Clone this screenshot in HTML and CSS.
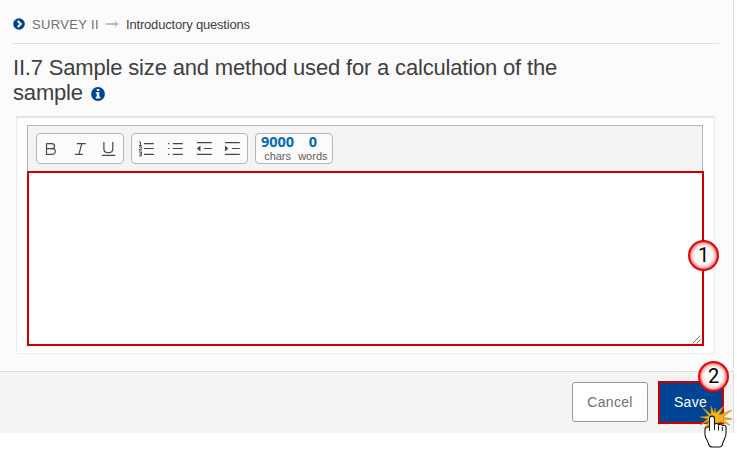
FILE: index.html
```
<!DOCTYPE html>
<html lang="en">
<head>
    <meta charset="UTF-8">
    <meta name="viewport" content="width=device-width, initial-scale=1.0">
    <title>Survey II - Introductory questions</title>
    <link rel="stylesheet" href="styles.css">
</head>
<body>

<div class="page">
    <!-- Main content -->
    <div class="main-content">
        <div class="breadcrumb">
            <svg class="crumb-icon" width="12" height="12" viewBox="0 0 12 12"><circle cx="6" cy="6" r="5.8" fill="#004494"/><path d="M4.8 3 7.8 6 4.8 9" fill="none" stroke="#fff" stroke-width="2"/></svg>
            <span class="crumb-parent">SURVEY II</span>
            <svg class="crumb-arrow" width="13" height="8" viewBox="0 0 13 8"><path d="M0 3h9V1l4 3-4 3V5H0z" fill="#bcbcbc"/></svg>
            <span class="crumb-current">Introductory questions</span>
        </div>

        <h1>II.7 Sample size and method used for a calculation of the<br>sample
            <svg class="info-icon" width="14" height="14" viewBox="0 0 14 14"><circle cx="7" cy="7" r="6.9" fill="#004494"/><path d="M5.8 2h2.5v2H5.8zM4.8 5.2h3.5v4.6h1v1.6H4.8V9.8h1V6.7h-1z" fill="#fff"/></svg>
        </h1>

        <div class="card">
            <div class="toolbar">
                <div class="tool-group styles">
                    <svg class="tool" viewBox="0 0 29 29"><path d="M9.6 9.5h5.2c4 0 4 5.2 0 5.2H9.6M14.8 14.7c5 0 5 5.8 0 5.8H9.6v-11" /></svg>
                    <svg class="tool" viewBox="0 0 29 29"><path d="M11 9.5h9M9 20.5h8M16 9.5l-3 11" /></svg>
                    <svg class="tool" viewBox="0 0 29 29"><path d="M10 8v7c0 5 9 5 9 0V8M8 21.5h13.5" /></svg>
                </div>
                <div class="tool-group lists">
                    <svg class="tool" viewBox="0 0 29 29"><path d="M12 9.5h10M12 14.5h10M12 20.5h10"/><path class="marks" d="M7 8h1.5v3.5M7 11.5h3M7 13h2.5v1.5L7 16h3M7 18h2.5v4H7M7.5 20h2"/></svg>
                    <svg class="tool" viewBox="0 0 29 29"><path d="M12 9.5h10M12 14.5h10M12 20.5h10M7 9.5h1.4M7 14.5h1.4M7 20.5h1.4"/></svg>
                    <svg class="tool" viewBox="0 0 29 29"><path d="M7 8.5h15M14 14.5h8M7 20.5h15"/><path class="solid" d="M10.5 11.5v6L7 14.5z"/></svg>
                    <svg class="tool" viewBox="0 0 29 29"><path d="M7 8.5h15M14 14.5h8M7 20.5h15"/><path class="solid" d="M7 11.5v6l3.5-3z"/></svg>
                </div>
                <div class="tool-group counter">
                    <div class="count chars"><b>9000</b><span>chars</span></div>
                    <div class="count words"><b>0</b><span>words</span></div>
                </div>
            </div>
            <div class="text-area">
                <svg class="resizer" width="9" height="9" viewBox="0 0 9 9"><path d="M.5 8.5l8-8M4.5 8.5l4-4"/></svg>
                <span class="marker marker-text">1</span>
            </div>
        </div>
    </div>

    <!-- Buttons -->
    <div class="footer">
        <button class="btn cancel-btn">Cancel</button>
        <div class="save-wrap">
            <button class="btn save-btn">Save</button>
            <span class="marker marker-save">2</span>
            <svg class="pointer" width="36" height="47" viewBox="0 0 36 47">
                <path class="burst" d="M12 12.500 3 5l7 9-9 1 8 2-8 6 9-4-5 8 8-6h5l4-1 9 3-7-5 9-1-9-2 9-7-13 5 5-9-8 7-1-5-1 5-3-7z"/>
                <path class="hand" d="M10.500 17c0-3.800 5-3.800 5 0v6c.5-2.200 4-2 4 .3.500-1.800 3.800-1.400 3.800.8.700-1.600 3.700-1 3.700 1.200v6.500c0 4-2.200 5.500-3 8.700-.4 3-1.500 4.500-4 4.500h-7c-2.500 0-3-1.500-3.700-4-.8-3-3.300-5-3.300-8.500v-4.500c.3-2.500 2.500-3.500 4.500-3z"/>
                <path class="fingers" d="M15.500 22v6M19.500 23.500v5M23.300 25v4M10.500 24v5"/>
            </svg>
        </div>
    </div>
</div>

</body>
</html>
```
FILE: styles.css
```
* {
    box-sizing: border-box;
}
body {
    margin: 0;
    min-height: 450px;
    background-color: #fff;
    font-family: "Liberation Sans", Arial, sans-serif;
    color: #404040;
}
.page {
    width: 734px;
    height: 433px;
    border-right: 1px solid #e0e0e0;
    background-color: #fbfbfb;
    display: flex;
    flex-direction: column;
}
.main-content {
    height: 371px;
    padding: 0 14px 0 13px;
}

/* Breadcrumb */
.breadcrumb {
    height: 44px;
    padding-top: 5px;
    border-bottom: 1px solid #e0e0e0;
    display: flex;
    align-items: center;
    font-size: 13px;
}
.crumb-parent {
    margin-left: 7px;
    color: #707070;
    letter-spacing: 0.35px;
}
.crumb-arrow {
    margin: 0 7px;
}
.crumb-current {
    letter-spacing: -0.18px;
}
h1 {
    margin: 11px 0 0;
    font-size: 22px;
    line-height: 25px;
    font-weight: normal;
    letter-spacing: -0.175px;
}
.info-icon {
    margin-left: 2px;
    vertical-align: -1px;
}

/* Editor */
.card {
    width: 699px;
    height: 238px;
    margin: 11px 0 0 3px;
    padding: 7px 10px;
    border: 1px solid #ebebeb;
    border-top: 2px solid #e4e4e4;
    background-color: #fff;
}
.toolbar {
    width: 676px;
    height: 46px;
    padding: 7px 8px;
    border: 1px solid #b6b6b6;
    border-bottom: none;
    background-color: #f4f4f4;
    display: flex;
    gap: 7px;
}
.tool-group {
    height: 31px;
    border: 1px solid #b6b6b6;
    border-radius: 4px;
    background-color: #fbfbfb;
    display: flex;
}
.styles {
    width: 88px;
}
.lists {
    width: 117px;
}
.tool {
    flex: 1;
    min-width: 0;
    height: 29px;
    fill: none;
    stroke: #474747;
    stroke-width: 1.2;
}
.tool .marks {
    stroke-width: 1;
}
.tool .solid {
    fill: #474747;
    stroke: none;
}
.counter {
    width: 78px;
    padding: 0 5px;
    gap: 4px;
}
.count {
    display: flex;
    flex-direction: column;
    align-items: center;
}
.count b {
    color: #006bb4;
    font-family: "Open Sans", "Noto Sans", sans-serif;
    font-size: 14.5px;
    line-height: 16px;
    font-weight: 700;
}
.count span {
    font-size: 11px;
    line-height: 13px;
    color: #606060;
}
.text-area {
    position: relative;
    width: 677px;
    height: 175px;
    border: 2px solid #c00;
    background-color: #fff;
}
.resizer {
    position: absolute;
    right: 1px;
    bottom: 0;
    fill: none;
    stroke: #555;
    stroke-width: 0.8;
}

/* Numbered markers */
.marker {
    position: absolute;
    width: 31px;
    height: 31px;
    border: 2px solid #dd0a0a;
    border-radius: 50%;
    background: radial-gradient(circle closest-side, #fff 60%, #ffd0d0 84%, #f66 100%);
    color: #000;
    font-family: Roboto, sans-serif;
    font-size: 20px;
    line-height: 27px;
    text-align: center;
}
.marker-text {
    right: -17px;
    top: 67px;
}
.marker-save {
    left: 40px;
    top: -20px;
}

/* Footer */
.footer {
    height: 62px;
    padding: 9px 9px 9px 0;
    border-top: 1px solid #dcdcdc;
    background-color: #f4f4f4;
    display: flex;
    justify-content: flex-end;
    gap: 10px;
}
.btn {
    font-family: inherit;
    font-size: 14px;
    letter-spacing: 0.3px;
    padding: 0;
}
.cancel-btn {
    width: 76px;
    height: 40px;
    margin-top: 1px;
    border: 1px solid #999;
    border-radius: 3px;
    background-color: #fff;
    color: #707070;
}
.save-wrap {
    position: relative;
    width: 66px;
    height: 43px;
}
.save-btn {
    width: 66px;
    height: 43px;
    padding: 0 1px 2px 0;
    border: 2px solid #c00;
    background-color: #004494;
    color: #fff;
}
.pointer {
    position: absolute;
    left: 41px;
    top: 21px;
}
.burst {
    fill: #f0b41c;
    stroke: #b88308;
    stroke-width: 0.6;
}
.hand {
    fill: #fff;
    stroke: #111;
    stroke-width: 1.1;
}
.fingers {
    fill: none;
    stroke: #222;
    stroke-width: 1;
}
```
